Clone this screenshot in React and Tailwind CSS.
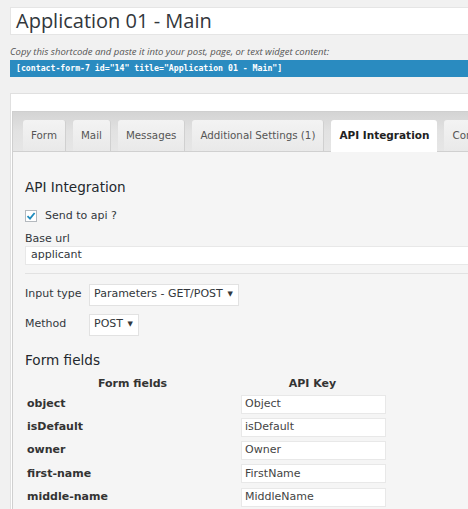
import React from "react";

const tabs = ["Form", "Mail", "Messages", "Additional Settings (1)", "API Integration", "Conditional Fields"];

const fields = [
  ["object", "Object"],
  ["isDefault", "isDefault"],
  ["owner", "Owner"],
  ["first-name", "FirstName"],
  ["middle-name", "MiddleName"],
];

const Select = ({ value, width }) => (
  <div
    className={`h-[22px] bg-white border border-[#e2e2e2] flex items-center justify-between pl-[4px] pr-[5px] text-[11px] text-[#32373c] ${width}`}
  >
    <span>{value}</span>
    <span className="text-[7px]">▼</span>
  </div>
);

const App = () => {
  return (
    <div className="min-h-screen bg-[#f1f1f1] overflow-hidden text-[#32373c] font-['DejaVu_Sans',sans-serif]">
      <div className="pl-[10px] pt-[7px] w-[700px]">
        <div className="h-[28px] bg-white border border-[#e5e5e5] flex items-center pl-[5px] text-[20px] text-[#32373c] font-['Open_Sans',sans-serif]">
          Application 01 - Main
        </div>
        <p className="mt-[11px] text-[9.5px] italic text-[#555] font-['Open_Sans',sans-serif] leading-[12px]">
          Copy this shortcode and paste it into your post, page, or text widget content:
        </p>
        <div className="mt-[2px] h-[17px] bg-[#2a8bc0] text-white text-[8.2px] font-bold flex items-center pl-[6px] font-['DejaVu_Sans_Mono',monospace]">
          [contact-form-7 id="14" title="Application 01 - Main"]
        </div>

        <div className="mt-[16px] bg-white border-t border-l border-[#e0e0e0] pt-[17px] pl-[1px]">
          <div className="flex gap-[7px] pl-[10px] pt-[8px] border-t border-l border-[#cfcfcf] bg-gradient-to-b from-[#d4d4d4] via-[#e2e2e2] to-[#e6e6e6]">
            {tabs.map((t) =>
              t === "API Integration" ? (
                <div
                  key={t}
                  className="h-[32px] px-[8px] flex items-center bg-white rounded-t-[3px] text-[10.5px] font-bold text-[#222] -mb-[1px] whitespace-nowrap"
                >
                  {t}
                </div>
              ) : (
                <div
                  key={t}
                  className="h-[31px] px-[8px] flex items-center rounded-t-[3px] bg-gradient-to-b from-[#f3f3f3] to-[#e9e9e9] border-r border-[#d0d0d0] text-[10.3px] text-[#555] whitespace-nowrap"
                >
                  {t}
                </div>
              )
            )}
          </div>

          <div className="bg-[#f5f5f5] border-l border-t border-[#d0d0d0] pl-[12px] pt-[26px] pb-[20px]">
            <h2 className="text-[13.6px] text-[#23282d] leading-[18px]">API Integration</h2>

            <label className="mt-[12px] flex items-center gap-[8px] text-[11px]">
              <span className="w-[12px] h-[12px] bg-white border border-[#b4b9be] flex items-center justify-center">
                <svg width="10" height="10" viewBox="0 0 10 10">
                  <path d="M1.5 5.2 L4 7.6 L8.6 2" fill="none" stroke="#1e8cbe" strokeWidth="1.8" />
                </svg>
              </span>
              Send to api ?
            </label>

            <div className="mt-[7px] text-[11px] leading-[14px]">Base url</div>
            <div className="h-[19px] bg-white border border-[#e8e8e8] flex items-center pl-[5px] text-[11px]">
              applicant
            </div>
            <div className="mt-[8px] border-t border-[#e2e2e2]" />

            <div className="mt-[10px] flex items-center">
              <span className="w-[64px] text-[11px]">Input type</span>
              <Select value="Parameters - GET/POST" width="w-[150px]" />
            </div>
            <div className="mt-[8px] flex items-center">
              <span className="w-[64px] text-[11px]">Method</span>
              <Select value="POST" width="w-[50px]" />
            </div>

            <h2 className="mt-[15px] text-[13.6px] text-[#23282d] leading-[18px]">Form fields</h2>

            <div className="mt-[7px] w-[370px] text-[11px]">
              <div className="flex font-bold text-[#333] h-[17px] items-center">
                <span className="w-[215px] text-center">Form fields</span>
                <span className="w-[145px] text-center">API Key</span>
              </div>
              {fields.map(([name, key]) => (
                <div key={name} className="flex items-center h-[23.25px]">
                  <span className="w-[216px] pl-[2px] font-bold text-[#333]">{name}</span>
                  <div className="w-[145px] h-[19px] bg-white border border-[#e8e8e8] flex items-center pl-[3px] text-[#444]">
                    {key}
                  </div>
                </div>
              ))}
            </div>
          </div>
        </div>
      </div>
    </div>
  );
};

export default App;
